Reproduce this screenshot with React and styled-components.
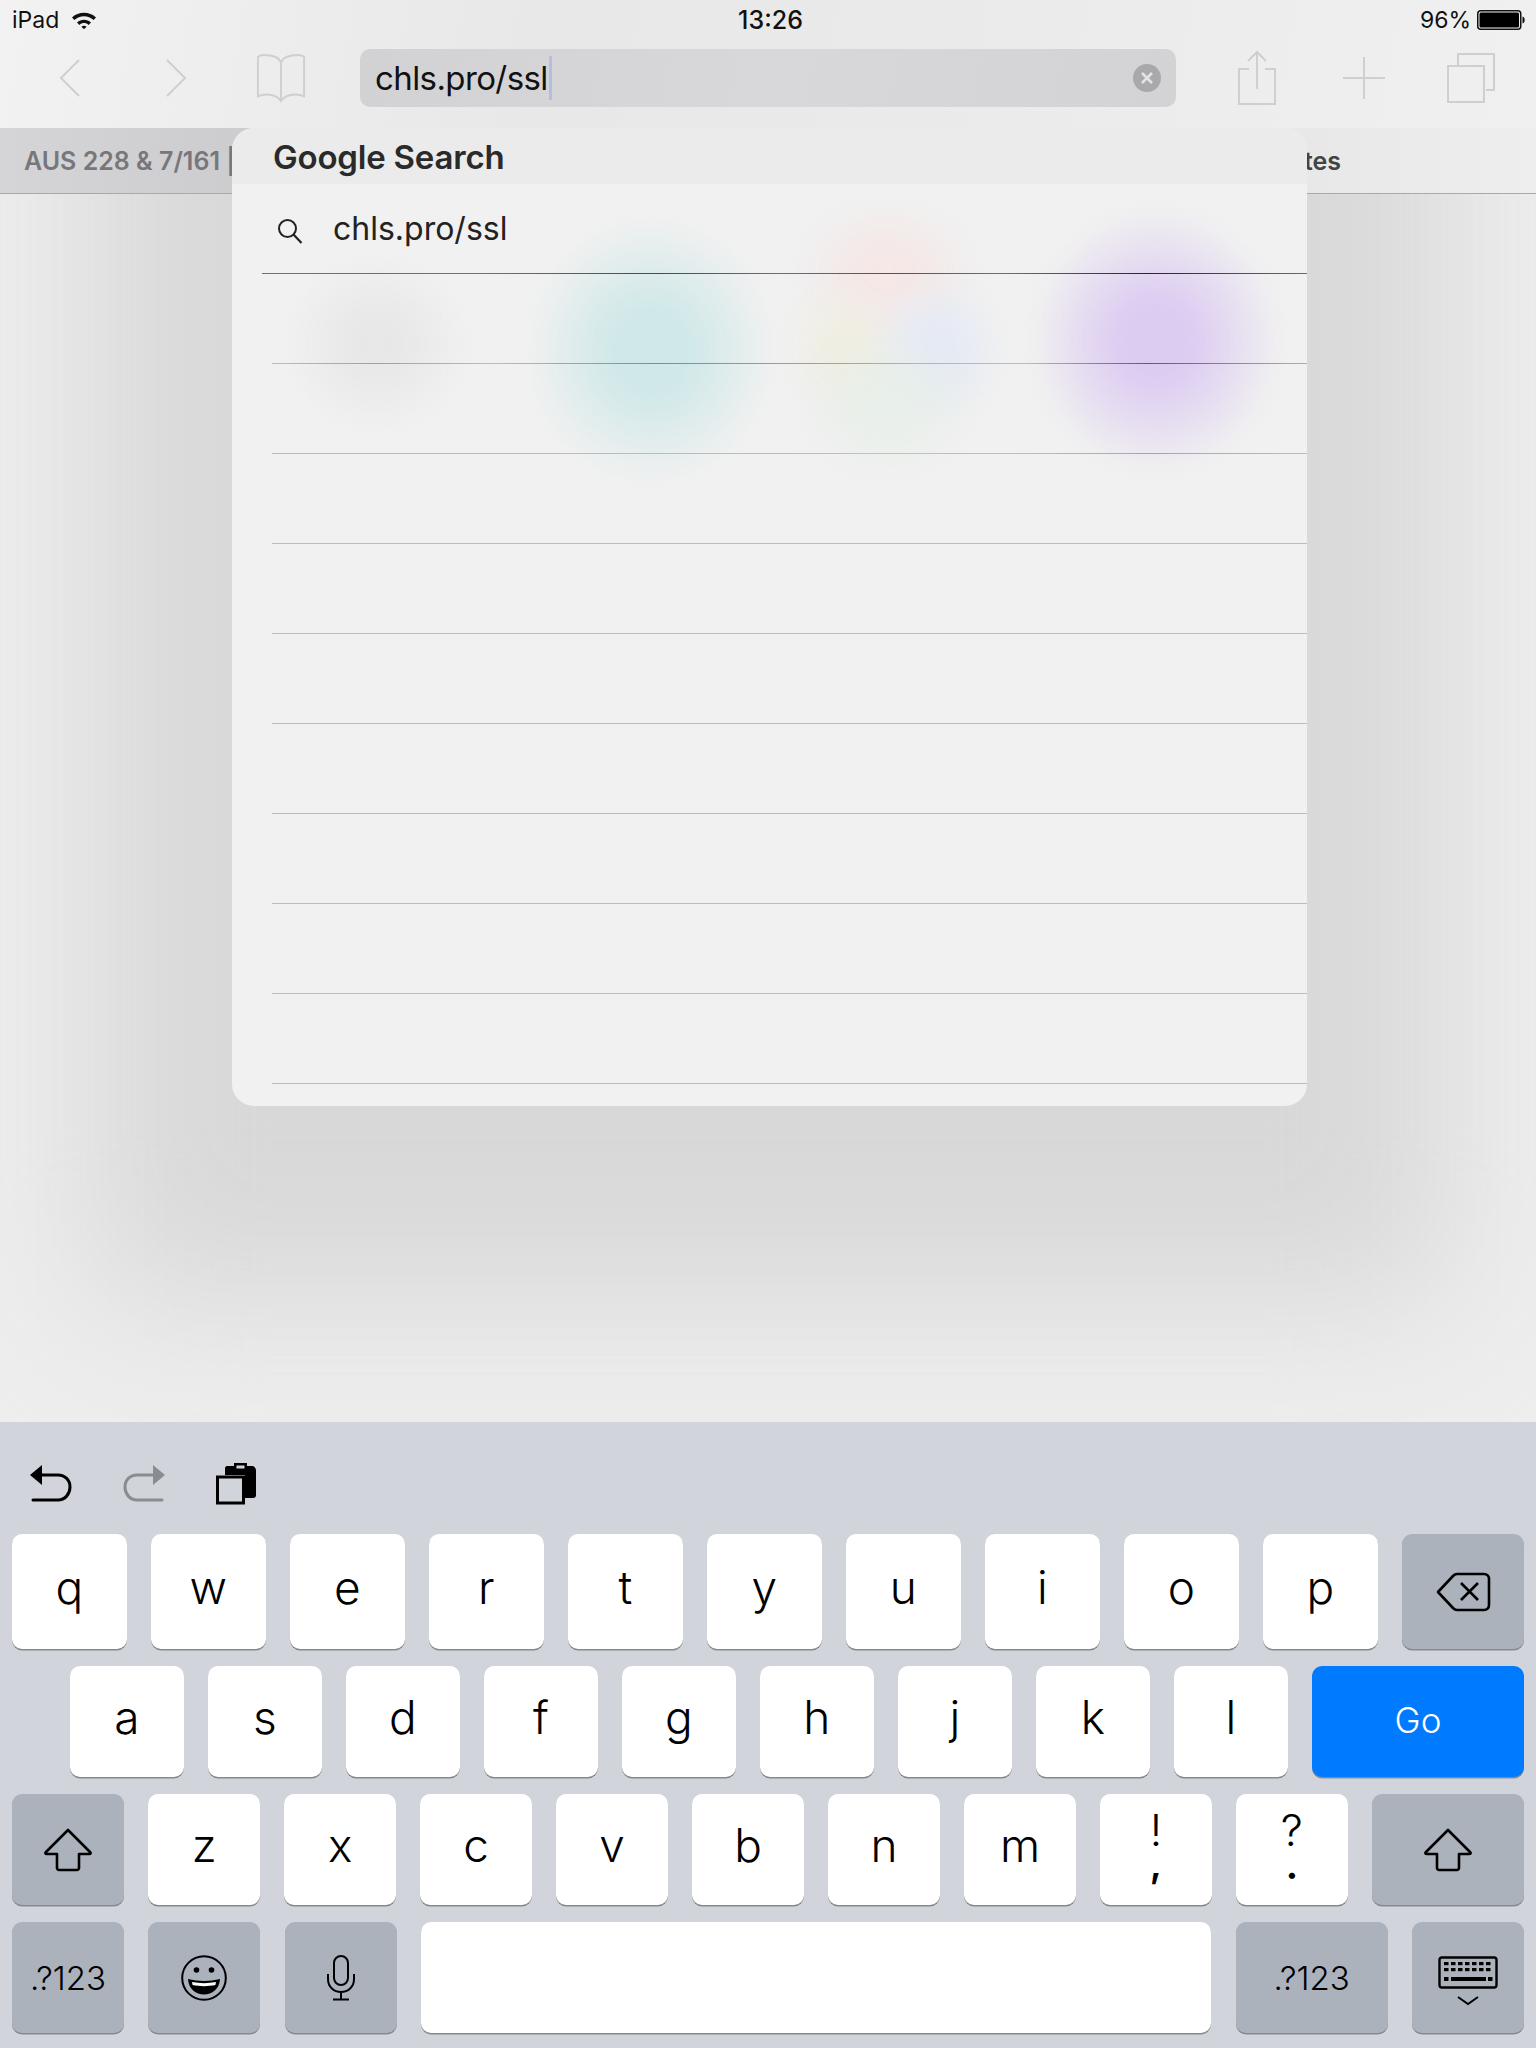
import React from 'react';
import styled, { createGlobalStyle } from 'styled-components';

const Global = createGlobalStyle`
  html, body { margin: 0; padding: 0; background: #eee; }
  * { box-sizing: border-box; }
`;

const Page = styled.div`
  position: relative;
  width: 1536px;
  height: 2048px;
  display: flex;
  flex-direction: column;
  overflow: hidden;
  font-family: Inter, "Liberation Sans", sans-serif;
  color: #000;
`;

const Top = styled.div`
  background: linear-gradient(100deg, #f2f2f2 0%, #e8e8e8 35%, #eaeaea 60%, #f0f0f0 100%);
`;

const StatusBar = styled.div`
  height: 40px;
  padding: 0 11px 0 12px;
  display: grid;
  grid-template-columns: 1fr auto 1fr;
  align-items: center;
  font-size: 23px;
  color: #111;
`;

const StatusSide = styled.div`
  display: flex;
  align-items: center;
  justify-content: ${p => (p.$end ? 'flex-end' : 'flex-start')};
  gap: ${p => (p.$end ? '6px' : '12px')};
`;

const Clock = styled.div`
  font-weight: 500;
  font-size: 25px;
  transform: translateX(2px);
`;

const Toolbar = styled.div`
  height: 88px;
  display: flex;
  align-items: flex-start;
  padding-top: 9px;
`;

const NavGroup = styled.div`
  width: 360px;
  padding-left: 17px;
  display: flex;
`;

const ActionGroup = styled.div`
  flex: 1;
  padding-left: 27px;
  display: flex;
`;

const ToolSlot = styled.div`
  width: ${p => p.$w}px;
  height: 58px;
  display: flex;
  align-items: center;
  justify-content: center;
`;

const UrlField = styled.div`
  width: 816px;
  height: 58px;
  border-radius: 10px;
  background: linear-gradient(100deg, #d2d2d4, #d8d8da 50%, #d3d3d5);
  display: flex;
  align-items: center;
  padding: 0 15px;
  font-size: 33px;
  letter-spacing: -0.6px;
  color: #111;
`;

const Caret = styled.span`
  width: 3px;
  height: 44px;
  background: #b4bfdf;
  margin-left: 1px;
`;

const ClearBtn = styled.span`
  margin-left: auto;
  width: 28px;
  height: 28px;
  border-radius: 50%;
  background: #a9a9ab;
  display: flex;
  align-items: center;
  justify-content: center;
`;

const TabBar = styled.div`
  height: 66px;
  border-bottom: 1.5px solid #a9a9a9;
  display: flex;
  align-items: center;
  justify-content: space-between;
  padding: 0 195px 0 24px;
  font-size: 25px;
  font-weight: 600;
  background: linear-gradient(90deg, #d5d5d7 0%, #cdcdd0 15%, #e8e8e8 85%, #eeeeee 100%);
`;

const TabText = styled.span`
  color: ${p => p.$c};
`;

const Content = styled.div`
  position: relative;
  flex: 1;
  overflow: hidden;
  background: #eeeeee;
`;

// the page behind the popover, blurred away
const ContentShade = styled.div`
  position: absolute;
  left: 90px;
  right: 90px;
  top: -240px;
  bottom: 120px;
  background: #d8d8d8;
  filter: blur(75px);
`;

const Panel = styled.div`
  position: absolute;
  left: 232px;
  top: 128px;
  width: 1075px;
  height: 978px;
  border-radius: 22px;
  overflow: hidden;
  background: #f1f1f1;
`;

const PanelHeader = styled.div`
  position: relative;
  z-index: 1;
  height: 56px;
  padding: 2px 0 0 41px;
  display: flex;
  align-items: center;
  background: #ebebeb;
  font-size: 33px;
  font-weight: 600;
  letter-spacing: -0.2px;
  color: #2a2a2a;
`;

const Glow = styled.div`
  position: absolute;
  left: ${p => p.$x - p.$w / 2}px;
  top: ${p => p.$y - p.$h / 2}px;
  width: ${p => p.$w}px;
  height: ${p => p.$h}px;
  background: radial-gradient(closest-side, ${p => p.$c} 0%, ${p => p.$c} 30%, transparent 100%);
  filter: blur(8px);
`;

const ResultRow = styled.div`
  position: relative;
  height: 89px;
  padding-left: 44px;
  display: flex;
  align-items: center;
  gap: 29px;
  font-size: 32px;
  color: #222;
`;

const EmptyRow = styled.div`
  height: 89px;
`;

const Separator = styled.div`
  position: relative;
  height: 1px;
  margin-left: ${p => p.$inset}px;
  background: ${p => p.$bg || '#bcbcbc'};
`;

const Keyboard = styled.div`
  height: 626px;
  background: #d1d5db;
  padding: 0 12px;
  display: flex;
  flex-direction: column;
`;

const Shortcuts = styled.div`
  height: 112px;
  margin-left: 18px;
  display: flex;
  align-items: center;
  gap: 51px;
  padding-top: 11px;
`;

const KeyRow = styled.div`
  display: flex;
  gap: 24.3px;
  height: ${p => p.$h}px;
  margin-bottom: ${p => p.$mb}px;
  padding-left: ${p => p.$pad || 0}px;
`;

const Key = styled.div`
  flex: ${p => (p.$w ? `0 0 ${p.$w}px` : '1 1 0')};
  border-radius: 10px;
  background: ${p => (p.$kind === 'go' ? '#007aff' : p.$kind === 'fn' ? '#abb2bc' : '#fff')};
  color: ${p => (p.$kind === 'go' ? '#fff' : '#000')};
  box-shadow: 0 1.5px 0 #88898d;
  display: flex;
  align-items: center;
  justify-content: center;
  font-size: ${p => (p.$kind === 'go' ? '35px' : p.$small ? '33px' : '46px')};
  font-weight: 300;
  padding-bottom: ${p => (p.$kind === 'fn' ? 0 : p.$kind === 'go' ? '4px' : '9px')};
`;

const PairKey = styled(Key)`
  flex-direction: column;
  font-size: 44px;
  line-height: 33px;
  padding-bottom: 5px;
`;

const PairLow = styled.span`
  font-size: ${p => (p.$heavy ? '38px' : '44px')};
  font-weight: ${p => (p.$heavy ? 600 : 500)};
`;

const Bare = styled.span`
  display: flex;
  transform: translateY(${p => p.$dy || 0}px);
`;

const Stroke = { fill: 'none', stroke: '#cfcfcf', strokeWidth: 2 };

const Wifi = () => (
  <svg width="26" height="18" viewBox="0 0 26 18">
    <path d="M1 6.5C7.5 .3 18.5 .3 25 6.5l-2.4 2.5C17.3 3.9 8.7 3.9 3.4 9z" fill="#111" />
    <path d="M6 11.5c4-3.8 10-3.8 14 0l-2.4 2.4c-2.7-2.4-6.5-2.4-9.2 0z" fill="#111" />
    <path d="M10.4 15.8c1.6-1.3 3.6-1.3 5.2 0L13 18.2z" fill="#111" />
  </svg>
);

const Battery = () => (
  <svg width="48" height="20" viewBox="0 0 48 20">
    <rect x="0.75" y="0.75" width="43" height="18.5" rx="3" fill="none" stroke="#111" strokeWidth="1.5" />
    <rect x="2.5" y="2.5" width="39.5" height="15" rx="1.5" fill="#000" />
    <path d="M45.5 6.5c1.5.3 2.2 1.6 2.2 3.5s-.7 3.2-2.2 3.5z" fill="#111" />
  </svg>
);

const Back = () => (
  <svg width="22" height="38" viewBox="0 0 22 38"><path d="M20 1L2 19l18 18" {...Stroke} /></svg>
);

const Forward = () => (
  <svg width="22" height="38" viewBox="0 0 22 38"><path d="M2 1l18 18L2 37" {...Stroke} /></svg>
);

const Book = () => (
  <svg width="50" height="50" viewBox="0 0 52 50">
    <path d="M26 9C24 3 17 1 8 1 5 1 3 2 2 3v41c6-3 19-3 24 5 5-8 18-8 24-5V3c-1-1-3-2-6-2-9 0-16 2-18 8zM26 9v40" {...Stroke} />
  </svg>
);

const Share = () => (
  <svg width="40" height="56" viewBox="0 0 40 56">
    <path d="M12 19H2v35h36V19H28M20 39V2M11 11l9-9 9 9" {...Stroke} />
  </svg>
);

const Plus = () => (
  <svg width="44" height="44" viewBox="0 0 44 44"><path d="M22 1v42M1 22h42" {...Stroke} /></svg>
);

const Tabs = () => (
  <svg width="50" height="50" viewBox="0 0 50 50">
    <path d="M12 12V1h36v36h-8" {...Stroke} /><rect x="2" y="13" width="36" height="36" {...Stroke} />
  </svg>
);

const Magnifier = () => (
  <svg width="28" height="28" viewBox="0 0 28 28">
    <circle cx="11.5" cy="11.5" r="8.5" fill="none" stroke="#222" strokeWidth="2" />
    <path d="M17.5 17.5l8 8.5" stroke="#222" strokeWidth="2.2" fill="none" />
  </svg>
);

const Undo = ({ color = '#000', flip }) => (
  <svg width="42" height="38" viewBox="0 0 42 38" style={flip ? { transform: 'scaleX(-1)' } : undefined}>
    <path d="M0 10L12 0v20z" fill={color} />
    <path d="M10 10h18c7 0 12 5 12 12s-5 13-12 13H3" fill="none" stroke={color} strokeWidth="3" strokeLinecap="round" />
  </svg>
);

const Paste = () => (
  <svg width="40" height="42" viewBox="0 0 40 42">
    <path d="M9 5c0-1 1-2 2-2h7V0h13v3h5c2 0 4 2 4 4v25c0 2-1 3-3 3h-8V12H9z" fill="#000" />
    <rect x="20.5" y="2.5" width="8" height="3" fill="#d1d5db" />
    <rect x="1.5" y="14" width="26" height="26" fill="#d1d5db" stroke="#000" strokeWidth="3" />
  </svg>
);

const Delete = () => (
  <svg width="56" height="40" viewBox="0 0 56 40">
    <path d="M3 20L18 4c1-1 2-2 4-2h27c3 0 5 2 5 5v26c0 3-2 5-5 5H22c-2 0-3-1-4-2z" fill="none" stroke="#000" strokeWidth="2.6" strokeLinejoin="round" />
    <path d="M26 11l17 17M43 11L26 28" stroke="#000" strokeWidth="2.6" fill="none" />
  </svg>
);

const Shift = () => (
  <svg width="48" height="44" viewBox="0 0 48 44">
    <path d="M24 2L2 24c-1 1-1 2 1 2h10v14c0 1 1 2 2 2h18c1 0 2-1 2-2V26h10c2 0 2-1 1-2z" fill="none" stroke="#000" strokeWidth="2.6" strokeLinejoin="round" />
  </svg>
);

const Emoji = () => (
  <svg width="46" height="46" viewBox="0 0 46 46">
    <circle cx="23" cy="23" r="21.8" fill="none" stroke="#000" strokeWidth="2" />
    <circle cx="15.5" cy="15" r="2.8" /><circle cx="30.5" cy="15" r="2.8" />
    <path d="M7 24c10 2.6 22 2.6 32 0-.5 10-8 15.5-16 15.5S7.5 34 7 24z" />
    <path d="M11 27c8 1.5 16 1.5 24 0l-.6 3c-7 1.5-16 1.5-22.8 0z" fill="#fff" />
  </svg>
);

const Mic = () => (
  <svg width="30" height="46" viewBox="0 0 30 46" fill="none" stroke="#000" strokeWidth="2">
    <rect x="8" y="1" width="14" height="29" rx="7" />
    <path d="M2 19v5c0 8 6 13 13 13s13-5 13-13v-5M15 37v7M7 44.5h16" />
  </svg>
);

const KeyColumns = [6, 13, 20, 27, 34, 41, 48];

const KeyboardGlyph = () => (
  <svg width="60" height="50" viewBox="0 0 60 50">
    <rect x="1.5" y="1.5" width="57" height="30" rx="2.5" fill="none" stroke="#000" strokeWidth="2.4" />
    {KeyColumns.map(x => <rect key={`a${x}`} x={x} y="6" width="4.5" height="3.2" />)}
    {KeyColumns.map(x => <rect key={`b${x}`} x={x} y="12" width="4.5" height="3.2" />)}
    <rect x="13" y="21" width="35" height="4" />
    <rect x="6" y="21" width="4.5" height="4" /><rect x="50" y="21" width="4.5" height="4" />
    <path d="M20 41l10 7 10-7" fill="none" stroke="#000" strokeWidth="2" />
  </svg>
);

const firstLine = 'linear-gradient(90deg, #6e6e78 0, #6e6e78 230px, #1c5c5e 394px, #6e6e76 520px, #8e3a34 626px, #6e6e76 740px, #2410a4 887px, #6c6680 1045px)';
const secondLine = 'linear-gradient(90deg, #bcbcbc 0, #a0a0a0 107px, #bcbcbc 220px, #54a09c 384px, #a0aa88 566px, #a4bccf 667px, #bcbcc4 750px, #6a44c8 877px, #b3a8d0 1035px)';
const thirdLine = 'linear-gradient(90deg, #bcbcbc 0, #bcbcbc 280px, #a8c4c2 384px, #bcbcbc 520px, #bcc4bc 616px, #bcbcbc 760px, #a99ccb 877px, #bcbcbc 1035px)';

const emptyRows = [1, 2, 3, 4, 5, 6, 7];

const topRow = ['q', 'w', 'e', 'r', 't', 'y', 'u', 'i', 'o', 'p'];
const homeRow = ['a', 's', 'd', 'f', 'g', 'h', 'j', 'k', 'l'];
const lowRow = ['z', 'x', 'c', 'v', 'b', 'n', 'm'];

export default function App() {
  return (
    <Page>
      <Global />
      <Top>
        <StatusBar>
          <StatusSide>iPad <Wifi /></StatusSide>
          <Clock>13:26</Clock>
          <StatusSide $end>96% <Battery /></StatusSide>
        </StatusBar>
        <Toolbar>
          <NavGroup>
            <ToolSlot $w={106}><Back /></ToolSlot>
            <ToolSlot $w={106}><Forward /></ToolSlot>
            <ToolSlot $w={104}><Book /></ToolSlot>
          </NavGroup>
          <UrlField>
            chls.pro/ssl<Caret />
            <ClearBtn>
              <svg width="14" height="14" viewBox="0 0 14 14"><path d="M2 2l10 10M12 2L2 12" stroke="#e4e4e4" strokeWidth="2.6" /></svg>
            </ClearBtn>
          </UrlField>
          <ActionGroup>
            <ToolSlot $w={107}><Share /></ToolSlot>
            <ToolSlot $w={107}><Plus /></ToolSlot>
            <ToolSlot $w={107}><Tabs /></ToolSlot>
          </ActionGroup>
        </Toolbar>
      </Top>
      <TabBar>
        <TabText $c="#77777b">AUS 228 &amp; 7/161 |</TabText>
        <TabText $c="#444">tes</TabText>
      </TabBar>
      <Content><ContentShade /></Content>
      <Panel>
        <Glow $x={145} $y={216} $w={180} $h={170} $c="rgba(226,226,226,.6)" />
        <Glow $x={418} $y={222} $w={245} $h={265} $c="rgba(205,231,232,.95)" />
        <Glow $x={655} $y={142} $w={180} $h={140} $c="rgba(246,228,226,.7)" />
        <Glow $x={610} $y={220} $w={120} $h={140} $c="rgba(240,236,214,.5)" />
        <Glow $x={708} $y={220} $w={130} $h={150} $c="rgba(226,232,246,.75)" />
        <Glow $x={655} $y={275} $w={180} $h={160} $c="rgba(228,238,230,.6)" />
        <Glow $x={924} $y={212} $w={250} $h={265} $c="rgba(220,203,241,.98)" />
        <PanelHeader>Google Search</PanelHeader>
        <ResultRow><Bare $dy={2}><Magnifier /></Bare>chls.pro/ssl</ResultRow>
        <Separator $inset={30} $bg={firstLine} />
        <EmptyRow />
        <Separator $inset={40} $bg={secondLine} />
        <EmptyRow />
        <Separator $inset={40} $bg={thirdLine} />
        {emptyRows.map(n => (
          <React.Fragment key={n}>
            <EmptyRow />
            <Separator $inset={40} />
          </React.Fragment>
        ))}
      </Panel>
      <Keyboard>
        <Shortcuts>
          <Undo />
          <Undo color="#8a8c90" flip />
          <Paste />
        </Shortcuts>
        <KeyRow $h={115} $mb={17}>
          {topRow.map(k => <Key key={k}>{k}</Key>)}
          <Key $w={122} $kind="fn"><Delete /></Key>
        </KeyRow>
        <KeyRow $h={111} $mb={17} $pad={58}>
          {homeRow.map(k => <Key key={k}>{k}</Key>)}
          <Key $w={212} $kind="go">Go</Key>
        </KeyRow>
        <KeyRow $h={111} $mb={17}>
          <Key $w={112} $kind="fn"><Shift /></Key>
          {lowRow.map(k => <Key key={k}>{k}</Key>)}
          <PairKey><span>!</span><PairLow $heavy>,</PairLow></PairKey>
          <PairKey><span>?</span><PairLow>.</PairLow></PairKey>
          <Key $w={152} $kind="fn"><Shift /></Key>
        </KeyRow>
        <KeyRow $h={111} $mb={0}>
          <Key $w={112} $kind="fn" $small>.?123</Key>
          <Key $w={112} $kind="fn"><Emoji /></Key>
          <Key $w={112} $kind="fn"><Mic /></Key>
          <Key />
          <Key $w={152} $kind="fn" $small>.?123</Key>
          <Key $w={112} $kind="fn"><Bare $dy={3}><KeyboardGlyph /></Bare></Key>
        </KeyRow>
      </Keyboard>
    </Page>
  );
}
